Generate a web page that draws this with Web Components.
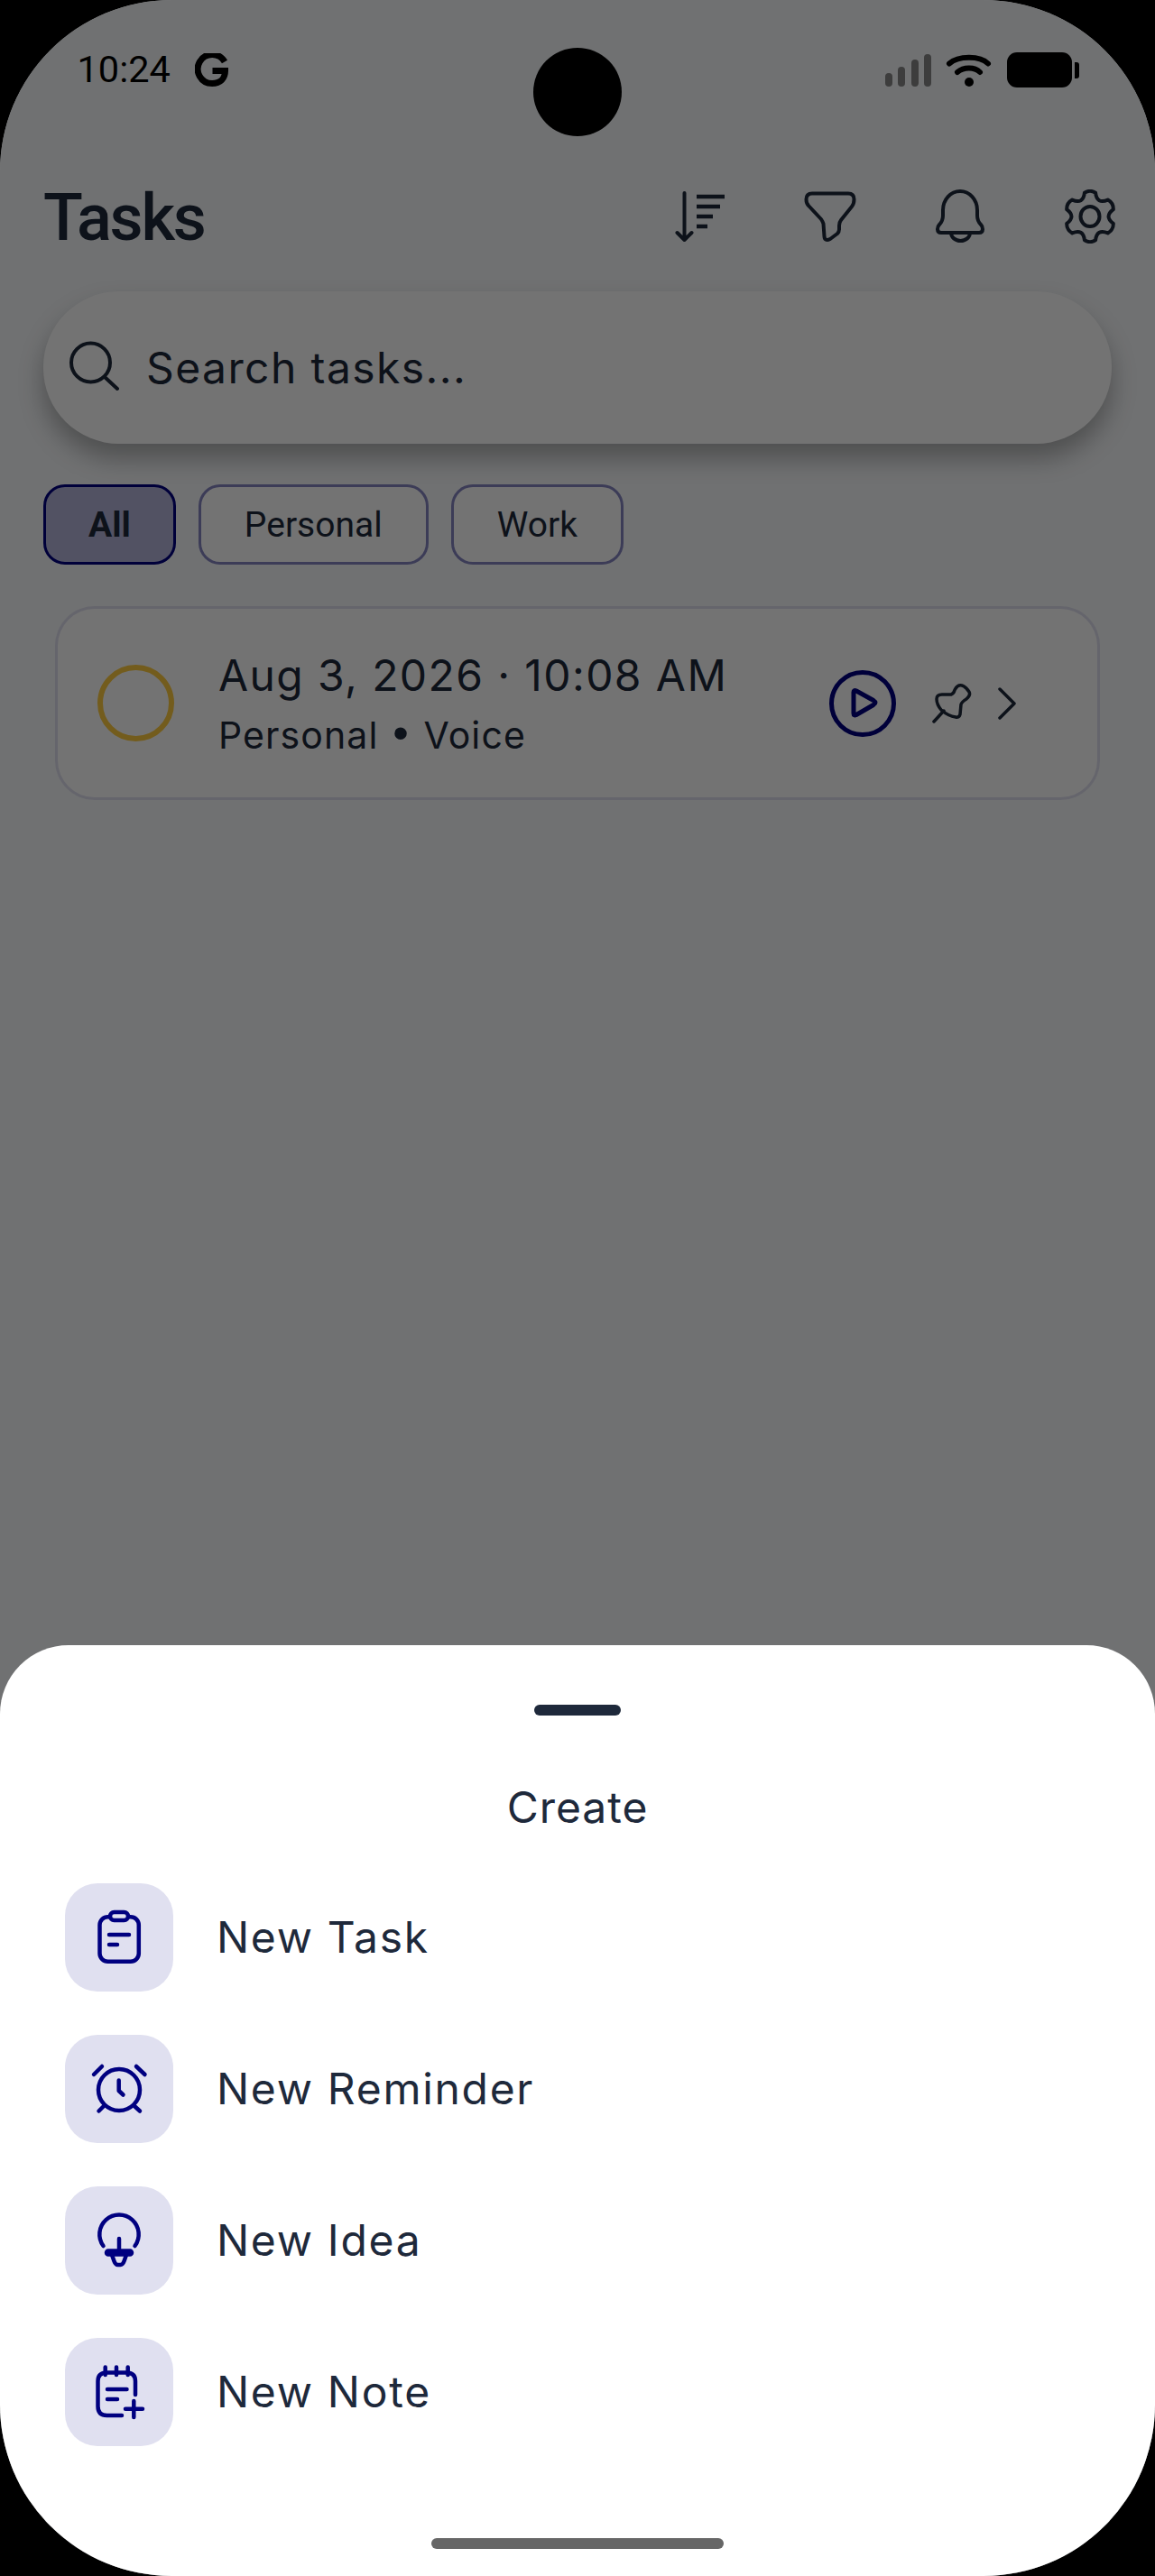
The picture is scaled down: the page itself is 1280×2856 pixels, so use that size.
<!DOCTYPE html>
<html lang="en"><head><meta charset="utf-8"><title>Tasks</title>
<style>
html,body{margin:0;padding:0;background:#000}
body{width:1280px;height:2856px;overflow:hidden;font-family:Inter,"Liberation Sans",sans-serif;color:#1e293b}
</style></head><body>
<app-screen>
  <status-bar></status-bar>
  <tasks-header title-text="Tasks"></tasks-header>
  <search-box placeholder="Search tasks..."></search-box>
  <chip-row>
    <filter-chip active>All</filter-chip>
    <filter-chip>Personal</filter-chip>
    <filter-chip>Work</filter-chip>
  </chip-row>
  <task-card title-text="Aug 3, 2026 · 10:08 AM" sub-text="Personal • Voice"></task-card>
  <sheet-panel slot="sheet" heading="Create">
    <sheet-item icon="clipboard">New Task</sheet-item>
    <sheet-item icon="alarm">New Reminder</sheet-item>
    <sheet-item icon="bulb">New Idea</sheet-item>
    <sheet-item icon="note">New Note</sheet-item>
  </sheet-panel>
</app-screen>
<script>
function def(name, html){
  customElements.define(name, class extends HTMLElement{
    constructor(){super();this.attachShadow({mode:'open'});}
    connectedCallback(){
      this.shadowRoot.innerHTML = typeof html==='function'?html(this):html;
    }
  });
}
const gear=(()=>{
  const p=(r,a)=>{const t=a*Math.PI/180;return (30+r*Math.cos(t)).toFixed(2)+' '+(30+r*Math.sin(t)).toFixed(2)};
  let d='M'+p(20.5,-120);
  for(let i=0;i<6;i++){
    const a=-90+60*i;
    d+=' Q'+p(21,a-19)+' '+p(27,a-13);
    d+=' Q'+p(30,a)+' '+p(27,a+13);
    d+=' Q'+p(21,a+19)+' '+p(20.5,a+30);
  }
  return d+'Z';
})();
def('app-screen',`<style>
:host{display:block;position:relative;width:1280px;height:2856px;background:#f8fafc;overflow:hidden;border-radius:190px}
.dim{position:absolute;inset:0;background:rgba(0,0,0,.55);z-index:1}
.cam{position:absolute;left:591px;top:53px;width:98px;height:98px;border-radius:50%;background:#000;z-index:3}
::slotted([slot=sheet]){position:absolute;left:0;right:0;top:1824px;bottom:0;z-index:2}
</style><slot></slot><div class="dim"></div><div class="cam"></div><slot name="sheet"></slot>`);
def('status-bar',`<style>
:host{display:flex;align-items:flex-start;position:relative;z-index:2;height:206px;box-sizing:border-box;padding:0 80px 0 85.5px}
.t{font:400 41.5px/48px Roboto,sans-serif;color:#000;margin-top:53px}
.g{margin:59px 0 0 27px;display:block}
.r{margin-left:auto;display:block;margin-top:56px}
</style><span class="t">10:24</span>
<svg class="g" width="38" height="38" viewBox="0 0 38 38" fill="none"><path d="M33 9.5A16 16 0 1 0 19 33.5C28.5 33.5 33.5 27.5 33.5 19.5H19.5" stroke="#000" stroke-width="7"/></svg>
<svg class="r" width="220" height="44" viewBox="0 0 220 44">
<g fill="#3d3d3d"><rect x="1" y="25" width="8" height="15" rx="4"/><rect x="15" y="18" width="8" height="22" rx="4"/><rect x="30" y="10" width="8" height="30" rx="4"/><rect x="44" y="4" width="8" height="36" rx="4"/></g>
<g fill="none" stroke="#000" stroke-width="6" stroke-linecap="round"><path d="M72 14.5C82 5.5 106 5.5 115 14.5"/><path d="M81 24C88 18 100 18 106 24"/></g><circle cx="94" cy="35" r="5" fill="#000"/>
<rect x="136" y="2" width="72" height="39" rx="11" fill="#000"/><path d="M211 13h2a3 3 0 0 1 3 3v12a3 3 0 0 1-3 3h-2z" fill="#000"/>
</svg>`);
def('tasks-header',h=>`<style>
:host{display:flex;align-items:center;height:72px;padding:0 42px 0 48px}
h1{margin:0;font:500 72px/72px Roboto,sans-serif;letter-spacing:-2.2px;color:#1e293b}
.i{margin-left:auto;display:flex;gap:84px;margin-top:-4px}
svg{display:block;width:60px;height:60px;fill:none;stroke:#1e293b;stroke-width:4;stroke-linecap:round;stroke-linejoin:round}
</style><h1>${h.getAttribute('title-text')}</h1><div class="i">
<svg viewBox="0 0 60 60"><path d="M12.5 4V56M4.5 48 12.5 56 20.5 48"/><path stroke-width="4.5" stroke-linecap="butt" d="M26 8H57M26 19H52M26 30H44M26 41H38"/></svg>
<svg viewBox="0 0 60 60"><path d="M10 4.5H50Q56.5 4.5 56.5 11 56.5 16 54 19L42 34Q40 36.5 40 40V44Q40 47 38 49L30 55Q24 58 23.5 52L22.5 38Q22 36 20 33L6 18Q3.5 15.5 3.5 11 3.5 4.5 10 4.5Z"/></svg>
<svg viewBox="0 0 60 60"><path d="M5 44Q5 41 7 39 11 35 11 29V23A19 21 0 0 1 49 23V29Q49 35 53 39 55 41 55 44 55 48 51 48H9Q5 48 5 44Z"/><path d="M20 48A10.5 9 0 0 0 41 48"/></svg>
<svg viewBox="0 0 60 60"><path d="${gear}"/><ellipse cx="30" cy="30" rx="10.5" ry="11"/></svg>
</div>`);
def('search-box',h=>`<style>
:host{display:flex;align-items:center;box-sizing:border-box;height:169px;margin:45px 48px 0;padding-left:24px;border-radius:84px;background:#fff;box-shadow:0 16px 28px rgba(0,0,0,.3)}
svg{display:block;width:60px;height:60px;fill:none;stroke:#1e293b;stroke-width:4;stroke-linecap:round;margin-top:-5px}
span{margin-left:30px;font:400 48px/60px Inter,sans-serif;letter-spacing:1.4px;color:#1e293b}
</style><svg viewBox="0 0 60 60"><circle cx="28.5" cy="27" r="21.5"/><path d="M44 43 58 56"/></svg><span>${h.getAttribute('placeholder')}</span>`);
def('chip-row',`<style>:host{display:flex;gap:25px;margin:45px 48px 0}</style><slot></slot>`);
def('filter-chip',h=>`<style>
:host{display:flex;align-items:center;box-sizing:border-box;height:89px;padding:1px 48px 0;border-radius:24px;border:3px solid rgba(0,0,128,.48);background:#fff;
font:400 39px/44px Roboto,sans-serif;color:#1e293b}
:host([active]){border-color:#000080;background:rgba(0,0,128,.27);font-weight:700;padding:1px 47px 0}
</style><slot></slot>`);
def('task-card',h=>`<style>
:host{display:flex;align-items:center;box-sizing:border-box;height:215px;margin:46px 61px 0 61px;padding:0 0 0 44px;border-radius:44px;border:3px solid rgba(0,0,128,.12);background:#fff}
.c{display:block;width:85px;height:85px;box-sizing:border-box;border:6px solid #ffcc40;border-radius:50%;flex:none}
.t{margin-left:49px;flex:1}
.a{font:400 48px/60px Inter,sans-serif;letter-spacing:1.4px;color:#1e293b}
.b{font:400 41px/50px Inter,sans-serif;letter-spacing:1.1px;color:#1e293b;margin-top:9px}
.b span{font:400 50px/50px "Liberation Sans",sans-serif;margin:0 3px}
.i{display:flex;align-items:center;margin-right:90px}
svg{display:block;fill:none;stroke-linecap:round;stroke-linejoin:round}
</style><span class="c"></span><div class="t"><div class="a">${h.getAttribute('title-text')}</div><div class="b">${h.getAttribute('sub-text').replace('•','<span>•</span>')}</div></div>
<div class="i">
<svg width="74" height="74" viewBox="0 0 74 74" stroke="#000080" stroke-width="5"><circle cx="37" cy="37" r="34.5"/><path d="M27 24.5Q27 21.5 30 23L49 33.5Q53 36 49 38.5L30 49.5Q27 51 27 48Z"/></svg>
<svg style="margin-left:40px" width="44" height="44" viewBox="0 0 44 44" stroke="#1e293b" stroke-width="3.5"><path d="M2 42 13 30"/><path d="M25 7Q28 1 33 2 37 3 41 9 43 13 38 17 33 20 32 23L31 34Q30 38 26 37 18 36 10 29 5 23 5 17 5 12 11 12 17 12 21 12 24 11 25 7Z"/></svg>
<svg style="margin-left:29px" width="20" height="36" viewBox="0 0 20 36" stroke="#1e293b" stroke-width="3.5"><path d="M2 2 18 18 2 34"/></svg>
</div>`);
def('sheet-panel',h=>`<style>
:host{display:block;background:#fff;border-radius:76px 76px 0 0;box-sizing:border-box;padding-top:66px;position:relative}
.h{width:96px;height:12px;border-radius:6px;background:#1e293b;margin:0 auto}
.t{text-align:center;font:400 48px/60px Inter,sans-serif;letter-spacing:.96px;color:#1e293b;margin-top:72px}
.l{display:flex;flex-direction:column;gap:48px;padding:0 72px;margin-top:54px}
.home{position:absolute;left:478px;bottom:30px;width:324px;height:12px;border-radius:6px;background:#666}
</style><div class="h"></div><div class="t">${h.getAttribute('heading')}</div><div class="l"><slot></slot></div><div class="home"></div>`);
const ICONS={
clipboard:`<rect x="38.5" y="37.2" width="43.3" height="49.6" rx="9"/><rect x="50" y="32" width="20" height="9" rx="4.5" fill="#e0e0f0"/><path d="M49 57H71M49 68H58"/>`,
alarm:`<circle cx="60" cy="61" r="23"/><path d="M59.7 50.5V62L64.5 66.5M32 44 41 35M79 35 88.5 44M37.5 84.5 43 79M77 79 83 84.5"/>`,
bulb:`<path d="M42.5 66A21.7 21.7 0 1 1 77.5 66M60 58V71"/><path d="M48 71.5H72A2 2 0 0 1 72 75.5H48A2 2 0 0 1 48 71.5Z"/><path d="M52 76 54.5 83Q56 87 58.5 87H61.5Q64 87 65.5 83L68 76"/>`,
note:`<path d="M63 86H46.5Q36.5 86 36.5 76V48Q36.5 38.5 46.5 38.5H68Q78 38.5 78 48V63"/><path d="M44.7 32.5V41M57 32.5V41M69.7 32.5V41M47 57H68.5M47 68H58M67 78.7H86M76.3 70V88"/>`
};
def('sheet-item',h=>`<style>
:host{display:flex;align-items:center;height:120px}
.b{width:120px;height:120px;border-radius:36px;background:#e0e0f0;flex:none}
svg{display:block;width:120px;height:120px;fill:none;stroke:#000080;stroke-width:4.5;stroke-linecap:round;stroke-linejoin:round}
span{margin-left:48px;font:400 48px/60px Inter,sans-serif;letter-spacing:1.7px;color:#1e293b}
</style><div class="b"><svg viewBox="0 0 120 120">${ICONS[h.getAttribute('icon')]}</svg></div><span><slot></slot></span>`);
</script>
</body></html>
